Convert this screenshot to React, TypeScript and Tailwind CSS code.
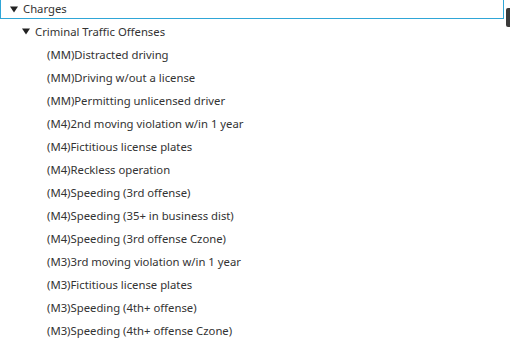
import React from "react";

const items = [
  "(MM)Distracted driving",
  "(MM)Driving w/out a license",
  "(MM)Permitting unlicensed driver",
  "(M4)2nd moving violation w/in 1 year",
  "(M4)Fictitious license plates",
  "(M4)Reckless operation",
  "(M4)Speeding (3rd offense)",
  "(M4)Speeding (35+ in business dist)",
  "(M4)Speeding (3rd offense Czone)",
  "(M3)3rd moving violation w/in 1 year",
  "(M3)Fictitious license plates",
  "(M3)Speeding (4th+ offense)",
  "(M3)Speeding (4th+ offense Czone)",
];

function Tri() {
  return (
    <svg width="8" height="7" viewBox="0 0 8 7" className="shrink-0">
      <path d="M0 0.5 L8 0.5 L4 6.5 Z" fill="#222" />
    </svg>
  );
}

export default function App() {
  return (
    <div
      className="relative w-[510px] h-[343px] bg-white overflow-hidden text-[11.3px] text-[#333]"
      style={{ fontFamily: '"Noto Sans", "Open Sans", sans-serif' }}
    >
      <div className="flex flex-col">
        <div className="w-[504px] h-[20px] mt-[-1px] border border-[#2fa6d7] flex items-center pl-[9px] gap-[5px]">
          <Tri />
          <span className="leading-none">Charges</span>
        </div>
        <div className="h-[23px] mt-[1px] flex items-center pl-[22px] gap-[5px]">
          <Tri />
          <span className="leading-none">Criminal Traffic Offenses</span>
        </div>
        {items.map((t) => (
          <div key={t} className="h-[23px] flex items-center pl-[47px]">
            <span className="leading-none">{t}</span>
          </div>
        ))}
      </div>
      <div className="absolute left-[506px] top-[8px] w-[4px] h-[19px] rounded-l-[2px] bg-[#3a3a3a]" />
    </div>
  );
}
